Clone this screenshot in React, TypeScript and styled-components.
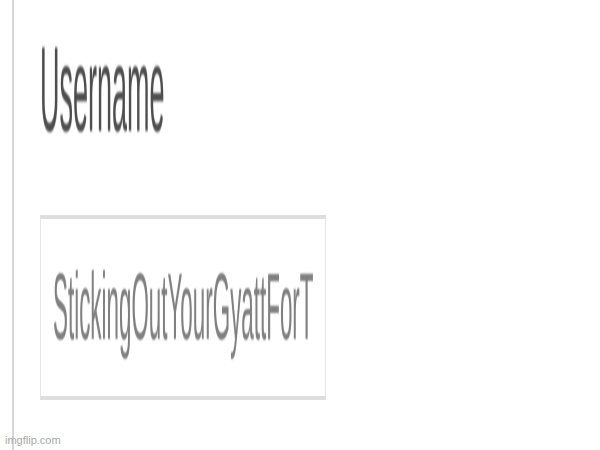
import * as React from 'react'
import styled, { createGlobalStyle } from 'styled-components'

const GlobalStyle = createGlobalStyle`
    html, body {
        margin: 0;
        padding: 0;
        background: #fff;
    }
    body {
        font-family: "Liberation Sans", Arial, sans-serif;
    }
`

const Page = styled.div`
    position: relative;
    display: flex;
    width: 600px;
    height: 450px;
    overflow: hidden;
    background: #fff;
`
const Gutter = styled.div`
    width: 12px;
    flex: none;
`
const Content = styled.div`
    flex: 1;
    display: flex;
    flex-direction: column;
    align-items: flex-start;
    border-left: 2px solid #d6d6d6;
    padding: 33px 0 0 26px;
`
const Label = styled.div`
    height: 120px;
    margin-bottom: 62px;
    font-size: 27px;
    line-height: 1;
    color: #4e4e4e;
    white-space: nowrap;
    transform: scaleY(4.45);
    transform-origin: top left;
    filter: blur(0.3px);
`
const Field = styled.div`
    box-sizing: border-box;
    width: 286px;
    height: 185px;
    padding: 26px 12px 0;
    border-top: 4px solid #dedede;
    border-bottom: 4px solid #dedede;
    border-left: 1px solid #e6e6e6;
    border-right: 1px solid #e6e6e6;
`
const FieldText = styled.div`
    width: 100%;
    overflow: hidden;
    font-size: 22.4px;
    line-height: 1.3;
    color: #808080;
    white-space: nowrap;
    transform: scaleY(4.25);
    transform-origin: top left;
    filter: blur(0.3px);
`
const Watermark = styled.span`
    position: absolute;
    left: 5px;
    bottom: 4px;
    font-size: 11px;
    color: #a8a8a8;
`

export default function App() {
    return (
        <>
            <GlobalStyle />
            <Page>
                <Gutter />
                <Content>
                    <Label>Username</Label>
                    <Field>
                        <FieldText>StickingOutYourGyattForT</FieldText>
                    </Field>
                </Content>
                <Watermark>imgflip.com</Watermark>
            </Page>
        </>
    )
}
